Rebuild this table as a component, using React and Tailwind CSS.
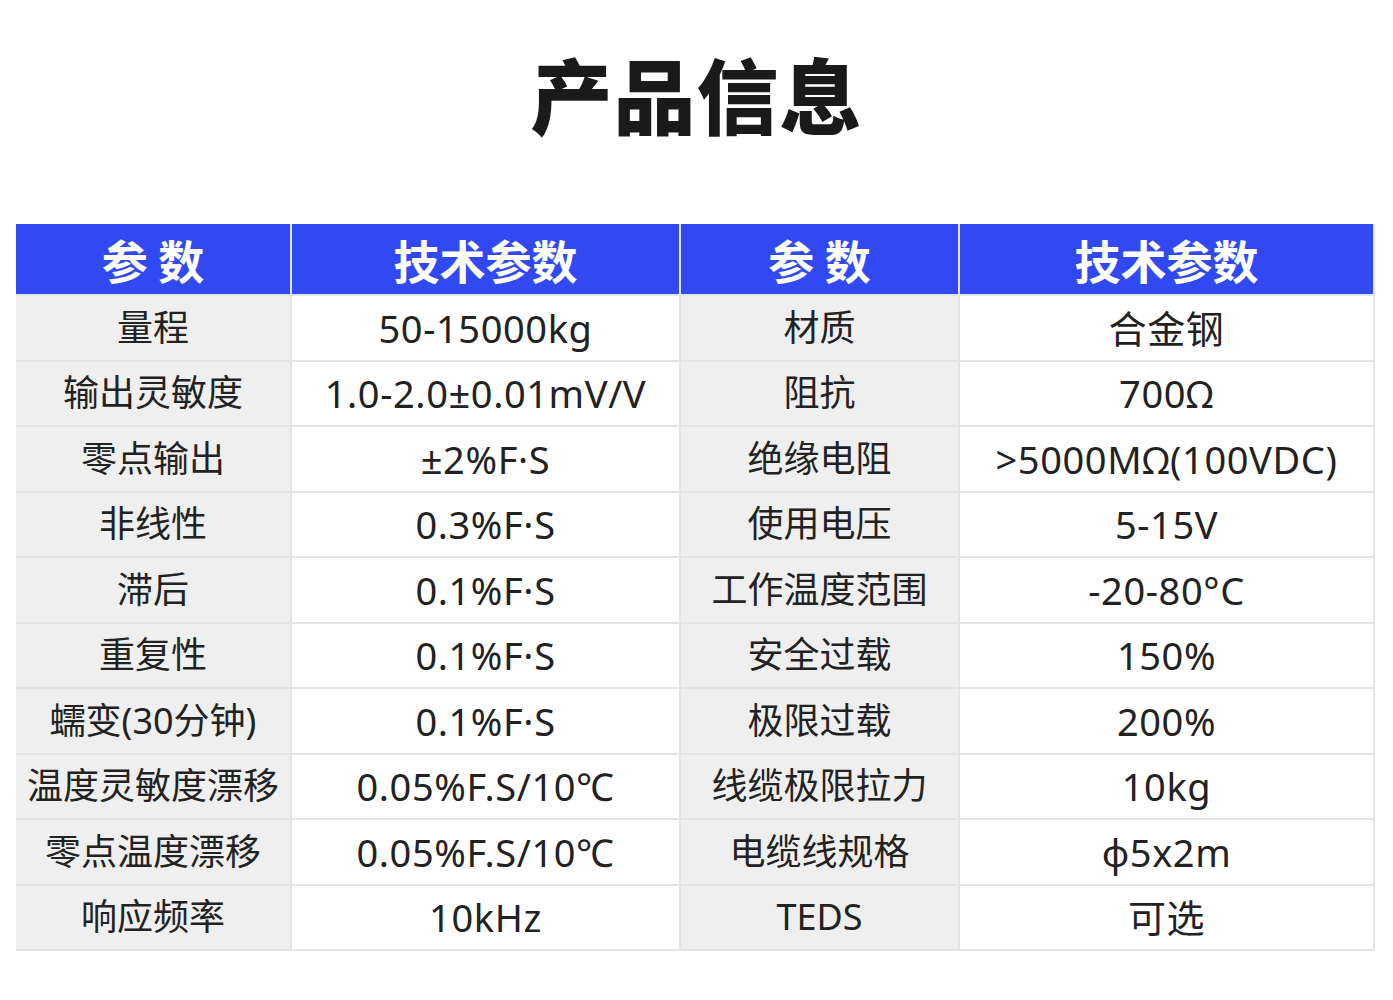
import React from "react";

// left pair and right pair of spec rows
const specRows = [
  ["量程", "50-15000kg", "材质", "合金钢"],
  ["输出灵敏度", "1.0-2.0±0.01mV/V", "阻抗", "700Ω"],
  ["零点输出", "±2%F·S", "绝缘电阻", ">5000MΩ(100VDC)"],
  ["非线性", "0.3%F·S", "使用电压", "5-15V"],
  ["滞后", "0.1%F·S", "工作温度范围", "-20-80°C"],
  ["重复性", "0.1%F·S", "安全过载", "150%"],
  ["蠕变(30分钟)", "0.1%F·S", "极限过载", "200%"],
  ["温度灵敏度漂移", "0.05%F.S/10℃", "线缆极限拉力", "10kg"],
  ["零点温度漂移", "0.05%F.S/10℃", "电缆线规格", "φ5x2m"],
  ["响应频率", "10kHz", "TEDS", "可选"],
];

const cjk = { fontFamily: '"Noto Sans CJK SC", "Noto Sans", sans-serif' };
const mixed = { fontFamily: '"Noto Sans", "Noto Sans CJK SC", sans-serif' };

export default function App() {
  return (
    <div className="w-[1393px] h-[1000px] bg-white text-[#222]" style={cjk}>
      {/* TITLE */}
      <div className="h-[224px] pt-[38px] flex justify-center">
        <h1 className="text-[82px] leading-[110px] font-black tracking-[1px] text-[#1a1a1a]">产品信息</h1>
      </div>

      {/* SPEC TABLE */}
      <div className="ml-[16px] w-[1359px] bg-[#e4e4e4] pr-[2px] pb-[2px]">
        <div className="grid grid-cols-[274px_387px_277px_413px] gap-x-[2px] bg-[#dfe3fb]">
          {["参 数", "技术参数", "参 数", "技术参数"].map((h, i) => (
            <div key={i} className="h-[70px] bg-[#3049f3] flex items-center justify-center text-white text-[46px] font-bold leading-none whitespace-pre">
              {h}
            </div>
          ))}
        </div>

        <div className="grid grid-cols-[274px_387px_277px_413px] gap-[2px] pt-[2px]" style={mixed}>
          {specRows.map((row, r) =>
            row.map((cell, c) => (
              <div
                key={`${r}-${c}`}
                className={`h-[63.5px] flex items-center justify-center leading-none whitespace-nowrap ${
                  c % 2 === 0 ? "bg-[#efefef] text-[36px]" : "bg-white text-[38px] tracking-[0.6px]"
                }`}
              >
                {cell}
              </div>
            ))
          )}
        </div>
      </div>
    </div>
  );
}
